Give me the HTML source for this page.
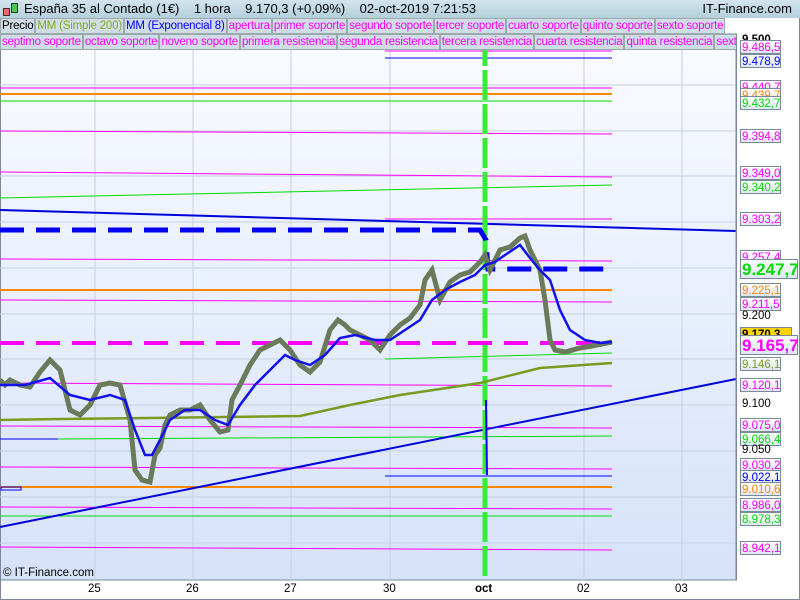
<!DOCTYPE html>
<html><head><meta charset="utf-8"><style>
body{margin:0;width:800px;height:600px;overflow:hidden;background:#fff;font-family:"Liberation Sans",sans-serif;position:relative}
.hdr{position:absolute;left:0;top:0;width:800px;height:18px;background:linear-gradient(#d3e4ee,#b4d0dc);font-size:13px;line-height:18px}
.row{position:absolute;left:0;height:16px;display:flex;font-size:11.5px;line-height:15px;letter-spacing:-0.2px}
.row span{border:1px solid #9aa;background:#d0dce6;padding:0 1px;color:#f0f;white-space:nowrap;box-sizing:border-box;height:16px}
.lab{position:absolute;left:740px;width:41px;height:14px;border:1px solid #7a8a99;background:linear-gradient(#fff,#dde6f2);font-size:11.5px;line-height:14px;padding-left:1px;box-sizing:border-box}
.ax{position:absolute;left:742px;font-size:11.5px}
.bx{position:absolute;top:583px;font-size:11.5px}
</style></head><body>
<svg width="800" height="600" style="position:absolute;left:0;top:0">
<defs><linearGradient id="g" x1="0" y1="0" x2="0" y2="1"><stop offset="0" stop-color="#fafbff"/><stop offset="1" stop-color="#d6e2fa"/></linearGradient></defs>
<rect x="0" y="34" width="736" height="546" fill="url(#g)"/>
<rect x="0.5" y="34" width="736" height="546" fill="none" stroke="#7a8a99"/>
<rect x="0.5" y="0.5" width="799" height="599" fill="none" stroke="#7a8a99"/>
<g stroke="#c4d0e0" stroke-width="1">
<line x1="95" y1="34" x2="95" y2="580"/><line x1="193" y1="34" x2="193" y2="580"/><line x1="291" y1="34" x2="291" y2="580"/><line x1="390" y1="34" x2="390" y2="580"/><line x1="584" y1="34" x2="584" y2="580"/><line x1="682" y1="34" x2="682" y2="580"/>
<line x1="0" y1="39" x2="736" y2="39"/><line x1="0" y1="85" x2="736" y2="85"/><line x1="0" y1="131" x2="736" y2="131"/><line x1="0" y1="176" x2="736" y2="176"/><line x1="0" y1="222" x2="736" y2="222"/><line x1="0" y1="268" x2="736" y2="268"/><line x1="0" y1="314" x2="736" y2="314"/><line x1="0" y1="359" x2="736" y2="359"/><line x1="0" y1="405" x2="736" y2="405"/><line x1="0" y1="451" x2="736" y2="451"/><line x1="0" y1="497" x2="736" y2="497"/><line x1="0" y1="543" x2="736" y2="543"/>
</g>
<g stroke-width="1">
<line x1="385" y1="51" x2="612" y2="51" stroke="#f0f"/>
<line x1="385" y1="58" x2="612" y2="58" stroke="#00f"/>
<line x1="0" y1="88" x2="612" y2="88" stroke="#f0f"/>
<line x1="0" y1="94" x2="612" y2="94" stroke="#f80" stroke-width="2"/>
<line x1="0" y1="101" x2="612" y2="101" stroke="#0d0"/>
<line x1="0" y1="131" x2="612" y2="134" stroke="#f0f"/>
<line x1="0" y1="172" x2="612" y2="177" stroke="#f0f"/>
<line x1="0" y1="198" x2="612" y2="185" stroke="#0d0"/>
<line x1="385" y1="219" x2="612" y2="219" stroke="#f0f"/>
<line x1="0" y1="259" x2="612" y2="261" stroke="#f0f"/>
<line x1="0" y1="290" x2="612" y2="290" stroke="#f80" stroke-width="2"/>
<line x1="0" y1="300" x2="612" y2="302" stroke="#f0f"/>
<line x1="385" y1="359" x2="612" y2="353" stroke="#0d0"/>
<line x1="0" y1="383" x2="612" y2="386" stroke="#f0f"/>
<line x1="0" y1="426" x2="612" y2="428" stroke="#f0f"/>
<line x1="58" y1="439" x2="612" y2="436" stroke="#0d0"/>
<line x1="0" y1="439" x2="58" y2="439" stroke="#00f"/>
<line x1="0" y1="467" x2="612" y2="469" stroke="#f0f"/>
<line x1="385" y1="476" x2="612" y2="476" stroke="#00f"/>
<line x1="0" y1="487" x2="612" y2="487" stroke="#f80" stroke-width="2"/>
<line x1="0" y1="507" x2="612" y2="509" stroke="#f0f"/>
<line x1="0" y1="516" x2="612" y2="516" stroke="#0d0"/>
<line x1="0" y1="547" x2="612" y2="550" stroke="#f0f"/>
<rect x="1" y="487" width="20" height="3" fill="none" stroke="#00f"/>
</g>
<line x1="0" y1="210" x2="736" y2="231" stroke="#00d" stroke-width="2"/>
<line x1="0" y1="527" x2="736" y2="379" stroke="#00d" stroke-width="2"/>
<line x1="485" y1="36" x2="485" y2="580" stroke="#3e3" stroke-width="5" stroke-dasharray="30,4"/>
<polyline points="0,230 480,230 486,240 488,269 612,269" fill="none" stroke="#00e" stroke-width="5" stroke-dasharray="24,12"/>
<line x1="0" y1="343" x2="612" y2="343" stroke="#f0f" stroke-width="4" stroke-dasharray="24,12"/>
<polyline points="486,400 487,475" stroke="#00f" stroke-width="2" fill="none"/>
<polyline points="0,420 60,419 150,418 300,416 350,405 400,395 480,383 540,368 612,363" fill="none" stroke="#7a9a20" stroke-width="2.5"/>
<polyline points="0,380 5,385 10,380 20,385 30,387 40,372 50,360 60,370 70,410 80,415 90,405 100,385 110,383 120,385 130,420 135,470 142,480 150,482 155,455 160,448 165,425 170,415 180,410 190,410 200,405 210,420 220,432 228,430 232,400 240,385 250,365 260,350 270,345 280,340 290,350 300,365 310,372 320,362 330,330 338,320 345,325 350,330 360,335 370,340 380,350 390,335 400,325 410,318 420,305 425,280 432,270 440,300 450,282 460,275 470,272 480,262 485,255 490,270 500,250 510,247 520,238 525,236 530,250 540,270 545,300 550,340 555,350 565,352 580,348 592,346 612,342" fill="none" stroke="#6a7a5a" stroke-width="5"/>
<polyline points="0,385 25,385 50,378 70,395 90,400 110,395 125,400 135,430 145,455 152,455 160,440 170,420 185,410 200,410 215,420 228,425 240,405 255,385 270,370 285,355 295,360 310,365 325,355 340,338 355,335 375,340 390,340 405,330 420,320 432,300 445,290 460,282 475,275 485,265 495,262 505,255 520,245 530,258 540,270 550,280 560,310 570,330 585,340 600,343 612,342" fill="none" stroke="#11e" stroke-width="2.5"/>
<line x1="736" y1="34" x2="736" y2="580" stroke="#7a8a99"/>
</svg>
<div class="hdr"><span style="display:inline-block;width:22px"><span style="position:absolute;left:3px;top:8px;width:5px;height:6px;background:#e66;border:1px solid #333"></span><span style="position:absolute;left:11px;top:3px;width:5px;height:8px;background:#4c4;border:1px solid #333"></span></span><span style="margin-left:2px">España 35 al Contado (1€)&nbsp;&nbsp;&nbsp; 1 hora&nbsp;&nbsp;&nbsp; 9.170,3 (+0,09%)&nbsp;&nbsp;&nbsp; 02-oct-2019 7:21:53</span><span style="position:absolute;right:8px">IT-Finance.com</span></div>
<div class="row" style="top:18px"><span style="color:#000">Precio</span><span style="color:#8a2">MM (Simple 200)</span><span style="color:#00f">MM (Exponencial 8)</span><span>apertura</span><span>primer soporte</span><span>segundo soporte</span><span>tercer soporte</span><span>cuarto soporte</span><span>quinto soporte</span><span>sexto soporte</span></div>
<div class="row" style="top:34px;width:736px;overflow:hidden"><span>septimo soporte</span><span>octavo soporte</span><span>noveno soporte</span><span>primera resistencia</span><span>segunda resistencia</span><span>tercera resistencia</span><span>cuarta resistencia</span><span>quinta resistencia</span><span>sexto</span></div>
<div class="ax" style="top:34px;font-weight:bold">9.500</div>
<div class="lab" style="top:40px;color:#f0f">9.486,5</div>
<div class="lab" style="top:54px;color:#00f">9.478,9</div>
<div class="lab" style="top:80px;color:#f0f">9.440,7</div>
<div class="lab" style="top:88px;color:#f80">9.439,7</div>
<div class="lab" style="top:96px;color:#0d0">9.432,7</div>
<div class="lab" style="top:129px;color:#f0f">9.394,8</div>
<div class="lab" style="top:166px;color:#f0f">9.349,0</div>
<div class="lab" style="top:180px;color:#0d0">9.340,2</div>
<div class="lab" style="top:212px;color:#f0f">9.303,2</div>
<div class="lab" style="top:250px;color:#f0f">9.257,4</div>
<div class="lab" style="top:259px;width:58px;height:20px;color:#0d0;font-size:17px;font-weight:bold;line-height:20px">9.247,7</div>
<div class="lab" style="top:283px;color:#f80">9.225,1</div>
<div class="lab" style="top:297px;color:#f0f">9.211,5</div>
<div class="ax" style="top:310px">9.200</div>
<div class="lab" style="top:327px;background:#ffd400;font-weight:bold;width:52px">9.170,3</div>
<div class="lab" style="top:335px;width:58px;height:20px;color:#f0f;font-size:17px;font-weight:bold;line-height:20px">9.165,7</div>
<div class="lab" style="top:357px;color:#7a9a20">9.146,1</div>
<div class="lab" style="top:378px;color:#f0f">9.120,1</div>
<div class="ax" style="top:398px">9.100</div>
<div class="lab" style="top:418px;color:#f0f">9.075,0</div>
<div class="lab" style="top:432px;color:#0d0">9.066,4</div>
<div class="ax" style="top:444px">9.050</div>
<div class="lab" style="top:458px;color:#f0f">9.030,2</div>
<div class="lab" style="top:470px;color:#00f">9.022,1</div>
<div class="lab" style="top:482px;color:#f80">9.010,6</div>
<div class="lab" style="top:498px;color:#f0f">8.986,0</div>
<div class="lab" style="top:512px;color:#0d0">8.978,3</div>
<div class="lab" style="top:541px;color:#f0f">8.942,1</div>
<div style="position:absolute;left:3px;top:567px;font-size:11.5px">© IT-Finance.com</div>
<div class="bx" style="left:88px">25</div><div class="bx" style="left:186px">26</div><div class="bx" style="left:284px">27</div><div class="bx" style="left:383px">30</div><div class="bx" style="left:475px;font-weight:bold">oct</div><div class="bx" style="left:577px">02</div><div class="bx" style="left:675px">03</div>
</body></html>
